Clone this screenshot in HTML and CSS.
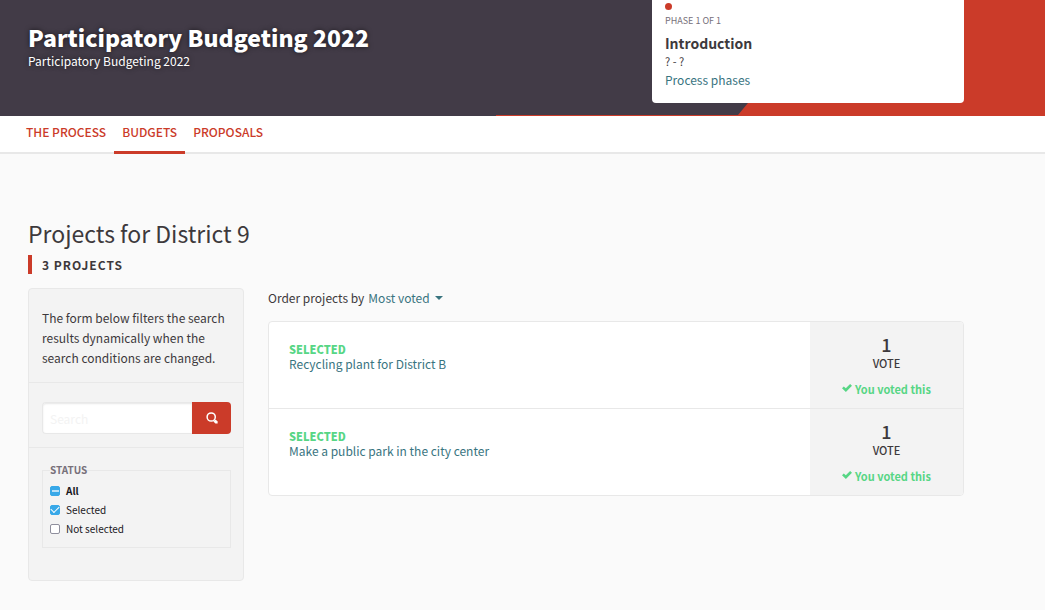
FILE: index.html
```html
<!DOCTYPE html>
<html lang="en">
<head>
<meta charset="utf-8">
<meta name="viewport" content="width=device-width, initial-scale=1">
<title>Projects for District 9 - Participatory Budgeting 2022</title>
<link rel="stylesheet" href="styles.css">
</head>
<body>
<header class="hero">
  <div class="wrapper hero-inner">
    <div class="hero-text">
      <h1 class="hero-title">Participatory Budgeting 2022</h1>
      <p class="hero-subtitle">Participatory Budgeting 2022</p>
    </div>
    <div class="phase">
      <span class="phase-dot"></span>
      <span class="phase-step">PHASE 1 OF 1</span>
      <strong class="phase-name">Introduction</strong>
      <span class="phase-dates">? - ?</span>
      <a class="phase-link" href="#">Process phases</a>
    </div>
  </div>
</header>
<nav class="tabs">
  <a class="tab" href="#">THE PROCESS</a>
  <a class="tab tab-active" href="#" aria-current="page">BUDGETS</a>
  <a class="tab" href="#">PROPOSALS</a>
</nav>
<main class="wrapper main">
  <h2 class="page-title">Projects for District 9</h2>
  <h3 class="count">3 PROJECTS</h3>
  <div class="columns">
    <form class="filters">
      <p class="filters-help">The form below filters the search results dynamically when the search conditions are changed.</p>
      <div class="filters-search">
        <input class="search-input" type="search" placeholder="Search" aria-label="Search">
        <button class="search-button" type="button" aria-label="Search">
          <svg class="search-icon" viewBox="0 0 12 12" aria-hidden="true"><circle cx="5.2" cy="5" r="4.1" fill="none" stroke="currentColor" stroke-width="1.5"/><path d="M7.4 9.4 9.4 7.4 11.6 9.2V11.4H9.4Z" fill="currentColor"/></svg>
        </button>
      </div>
      <div class="filters-status">
        <fieldset class="status">
          <legend class="status-legend">STATUS</legend>
          <label class="option option-all"><input class="check check-mixed" type="checkbox" checked>All</label>
          <label class="option"><input class="check" type="checkbox" checked>Selected</label>
          <label class="option"><input class="check" type="checkbox">Not selected</label>
        </fieldset>
      </div>
    </form>
    <section class="results">
      <div class="order">
        <span class="order-label">Order projects by</span>
        <button class="order-button" type="button">Most voted<span class="caret"></span></button>
      </div>
      <div class="projects">
        <article class="project">
          <div class="project-body">
            <strong class="project-state">SELECTED</strong>
            <a class="project-link" href="#">Recycling plant for District B</a>
          </div>
          <div class="project-votes">
            <span class="votes-number">1</span>
            <span class="votes-label">VOTE</span>
            <span class="voted"><svg class="voted-icon" viewBox="0 0 10 8" aria-hidden="true"><path d="M0 4.2 1.8 2.4 3.8 4.2 8.1 0 10 1.8 3.9 8Z" fill="currentColor"/></svg>You voted this</span>
          </div>
        </article>
        <article class="project">
          <div class="project-body">
            <strong class="project-state">SELECTED</strong>
            <a class="project-link" href="#">Make a public park in the city center</a>
          </div>
          <div class="project-votes">
            <span class="votes-number">1</span>
            <span class="votes-label">VOTE</span>
            <span class="voted"><svg class="voted-icon" viewBox="0 0 10 8" aria-hidden="true"><path d="M0 4.2 1.8 2.4 3.8 4.2 8.1 0 10 1.8 3.9 8Z" fill="currentColor"/></svg>You voted this</span>
          </div>
        </article>
      </div>
    </section>
  </div>
</main>
</body>
</html>
```
FILE: styles.css
```css
* { box-sizing: border-box; }
body {
  margin: 0;
  background: #fafafa;
  color: #3d393c;
  font-family: "Noto Sans CJK SC", "Open Sans", sans-serif;
  font-size: 12px;
  line-height: 20px;
}
h1, h2, h3, p { margin: 0; }
a { color: #39747f; text-decoration: none; }
button, input { font: inherit; }

.wrapper { max-width: 964px; padding-left: 28px; }

.hero { position: relative; background: #423b47; }
.hero::before {
  content: "";
  position: absolute;
  inset: 0 0 0 auto;
  width: 549px;
  background: #cb3b29;
  clip-path: polygon(338px 0, 100% 0, 100% 100%, 0 100%, 0 calc(100% - 1px), 242px calc(100% - 1px));
}
.hero-inner { position: relative; display: flex; justify-content: space-between; padding-bottom: 13px; }
.hero-text { padding-top: 23px; color: #fff; text-shadow: 0 0 5px rgba(0, 0, 0, .6); }
.hero-title { font-size: 23px; line-height: 29px; font-weight: 900; }
.hero-subtitle { line-height: 18px; }

.phase {
  display: flex;
  flex-direction: column;
  align-items: flex-start;
  width: 312px;
  padding: 3px 13px 13px;
  background: #fff;
  border-radius: 0 0 4px 4px;
}
.phase-dot { width: 7px; height: 7px; border-radius: 50%; background: #cb3b29; }
.phase-step { margin-top: 3px; font-size: 9px; line-height: 16px; color: #77707a; }
.phase-name { margin-top: 4px; font-size: 14px; line-height: 20px; font-weight: 700; }
.phase-dates { font-size: 11px; line-height: 17px; }
.phase-link { line-height: 20px; }

.tabs { display: flex; padding-left: 18px; background: #fff; border-bottom: 2px solid #e8e8e8; }
.tab {
  margin-bottom: -2px;
  padding: 6px 8px 9px;
  border-bottom: 3px solid transparent;
  font-weight: 500;
  color: #cb3b29;
}
.tab-active { border-bottom-color: #cb3b29; }

.main { padding-top: 63px; padding-bottom: 29px; }
.page-title { font-size: 23px; line-height: 32px; font-weight: 400; }
.count {
  margin-top: 6px;
  padding-left: 10px;
  border-left: 4px solid #cb3b29;
  font-size: 12px;
  line-height: 19px;
  font-weight: 700;
  letter-spacing: 1px;
}
.columns { display: grid; grid-template-columns: 216px 1fr; gap: 24px; margin-top: 14px; align-items: start; }

.filters { background: #f3f3f3; border: 1px solid #e8e8e8; border-radius: 4px; }
.filters-help { padding: 19px 13px 14px; }
.filters-search { display: flex; padding: 19px 12px 13px 13px; border: solid #e8e8e8; border-width: 1px 0; }
.search-input {
  flex: 1;
  min-width: 0;
  height: 32px;
  padding: 0 7px;
  border: 1px solid #e8e8e8;
  border-right: 0;
  border-radius: 4px 0 0 4px;
  background: #fff;
  box-shadow: inset 0 1px 2px rgba(10, 10, 10, .1);
}
.search-input::placeholder { color: #f3f3f3; opacity: 1; }
.search-button {
  width: 39px;
  height: 32px;
  padding: 0;
  border: 0;
  border-radius: 0 4px 4px 0;
  background: #cb3b29;
  color: #fff;
}
.search-icon { display: block; width: 12px; height: 12px; margin: 0 auto; }
.filters-status { padding: 13px 12px 32px 13px; }
.status { margin: 0; padding: 2px 7px 9px; border: 1px solid #e8e8e8; }
.status-legend { padding: 0; font-size: 10px; line-height: 18px; font-weight: 700; color: #77707a; }
.option { display: flex; align-items: center; gap: 6px; font-size: 10px; line-height: 19px; color: #1a181d; }
.option-all { font-weight: 700; }
.check {
  appearance: none;
  width: 10px;
  height: 10px;
  margin: 0;
  border: 1px solid #8f8f9d;
  border-radius: 2px;
  background: #fff;
}
.check:checked { display: grid; place-items: center; border-color: #38a8e8; background: #38a8e8; }
.check:checked::before { content: ""; width: 7px; height: 4px; margin-bottom: 2px; border: solid #fff; border-width: 0 0 1px 1px; rotate: -45deg; }
.check-mixed:checked::before { height: 2px; margin: 0; border: 0; background: #b9e0f8; rotate: none; }

.order { display: flex; align-items: center; gap: 4px; }
.order-button { display: flex; align-items: center; gap: 5px; padding: 0; border: 0; background: none; color: #39747f; }
.caret { border: 4px solid transparent; border-top-color: currentColor; border-bottom: 0; }
.projects { margin-top: 13px; border: 1px solid #e8e8e8; border-radius: 4px; background: #fff; overflow: hidden; }
.project { display: flex; }
.project + .project { border-top: 1px solid #e8e8e8; }
.project-body { display: flex; flex: 1; flex-direction: column; align-items: flex-start; padding: 20px; line-height: 15px; }
.project-state { font-size: 11px; line-height: 14px; font-weight: 900; color: #57d685; }
.project-votes { display: flex; flex-direction: column; align-items: center; width: 153px; padding: 11px 0 9px; background: #f3f3f3; }
.votes-number { font-size: 18px; line-height: 22px; font-weight: 500; }
.votes-label { font-size: 11px; line-height: 16px; font-weight: 500; }
.voted { display: flex; align-items: center; gap: 3px; margin-top: 8px; font-size: 11px; font-weight: 700; color: #57d685; }
.voted-icon { width: 10px; height: 8px; margin-bottom: 2px; }
```
